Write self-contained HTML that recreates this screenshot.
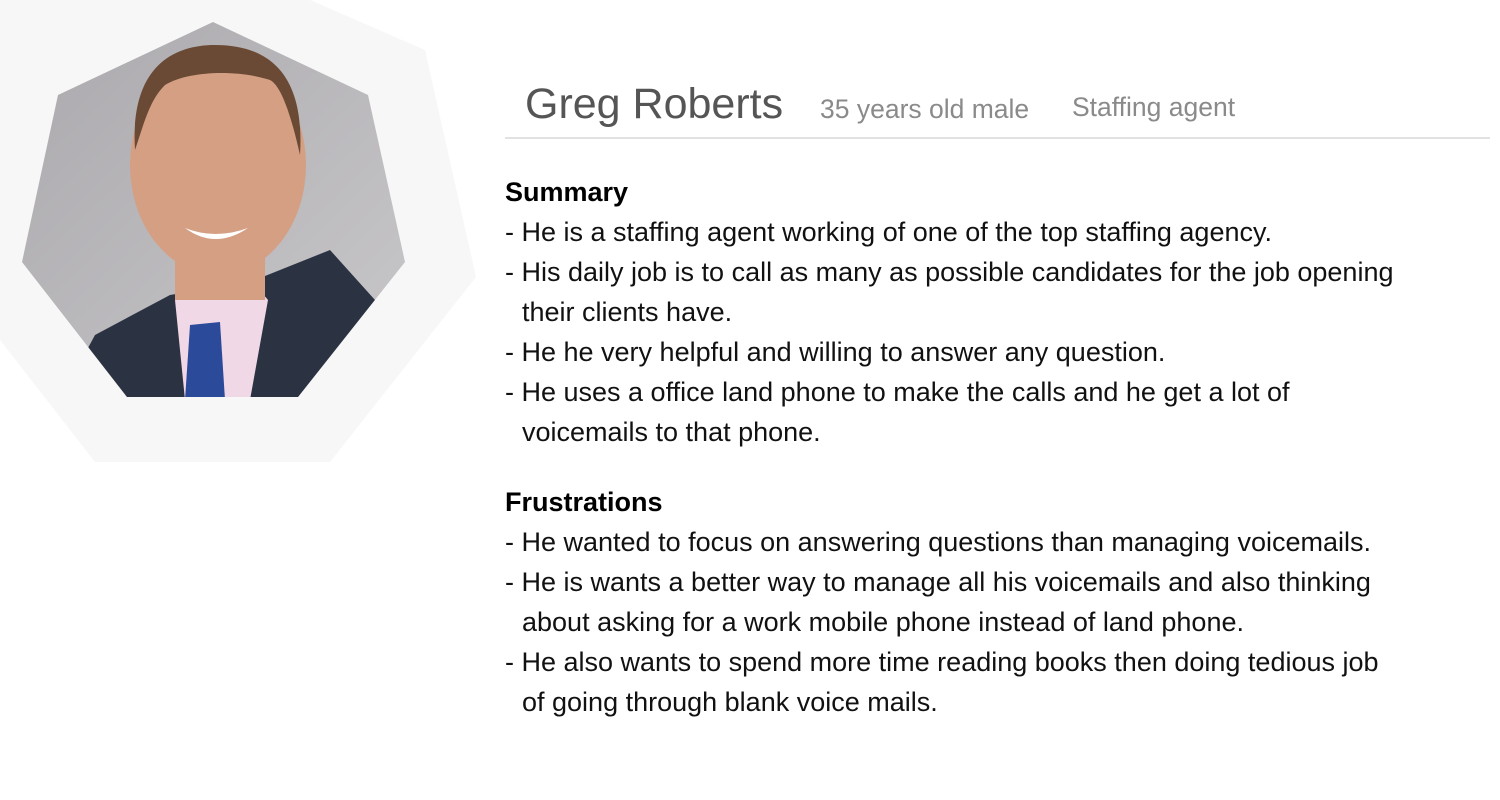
<!DOCTYPE html>
<html><head><style>
body{margin:0;width:1500px;height:800px;background:#fff;position:relative;overflow:hidden;font-family:"Liberation Sans",sans-serif;}
svg{position:absolute;left:0;top:0}
.hdr{position:absolute;left:505px;top:80px;width:985px;height:57px;border-bottom:2px solid #e2e2e2;}
.name{position:absolute;left:20px;top:0;font-size:43px;color:#555;white-space:nowrap}
.s1{position:absolute;left:315px;top:14px;font-size:26.5px;color:#8a8a8a;white-space:nowrap}
.s2{position:absolute;left:567px;top:12px;font-size:26.5px;color:#8a8a8a;white-space:nowrap}
.body{position:absolute;left:505px;top:172px;font-size:27px;line-height:40px;color:#111;white-space:nowrap}
.body b{font-size:27px;color:#000}
.ind{padding-left:17px}
</style></head><body>
<svg width="500" height="480" viewBox="0 0 500 480">
<defs>
<linearGradient id="bg" x1="0" y1="0" x2="1" y2="1"><stop offset="0" stop-color="#a9a7ab"/><stop offset="1" stop-color="#d0cfd1"/></linearGradient>
<clipPath id="hp"><polygon points="213,22 368,95 405,262 298,397 127,397 22,262 58,95"/></clipPath>
</defs>
<polygon points="0,0 310,0 425,50 476,277 330,462 95,462 0,340" fill="#f7f7f7"/>
<g clip-path="url(#hp)">
<rect x="0" y="0" width="500" height="480" fill="url(#bg)"/>
<path d="M60,400 L95,335 L170,295 L200,290 L255,280 L330,250 L375,300 L400,400 Z" fill="#2b3242"/>
<path d="M175,300 L185,400 L250,400 L268,300 L230,255 L190,260 Z" fill="#f1d8e6"/>
<path d="M190,325 L220,322 L225,400 L185,400 Z" fill="#2c4a9a"/>
<ellipse cx="218" cy="165" rx="88" ry="110" fill="#d59f84"/>
<rect x="175" y="230" width="90" height="70" fill="#d59f84"/>
<path d="M135,150 C130,70 170,45 215,45 C270,45 305,75 300,155 C290,110 280,85 270,80 C240,70 190,70 165,85 C150,100 145,120 135,150 Z" fill="#6a4a35"/>
<path d="M185,228 Q215,250 248,228 Q215,240 185,228 Z" fill="#fff"/>
</g>
</svg>
<div class="hdr"><span class="name">Greg Roberts</span><span class="s1">35 years old male</span><span class="s2">Staffing agent</span></div>
<div class="body">
<b>Summary</b><br>
- He is a staffing agent working of one of the top staffing agency.<br>
- His daily job is to call as many as possible candidates for the job opening<br>
<span class="ind">their clients have.</span><br>
- He he very helpful and willing to answer any question.<br>
- He uses a office land phone to make the calls and he get a lot of<br>
<span class="ind">voicemails to that phone.</span><br>
<div style="height:30px"></div>
<b>Frustrations</b><br>
- He wanted to focus on answering questions than managing voicemails.<br>
- He is wants a better way to manage all his voicemails and also thinking<br>
<span class="ind">about asking for a work mobile phone instead of land phone.</span><br>
- He also wants to spend more time reading books then doing tedious job<br>
<span class="ind">of going through blank voice mails.</span>
</div>
</body></html>
